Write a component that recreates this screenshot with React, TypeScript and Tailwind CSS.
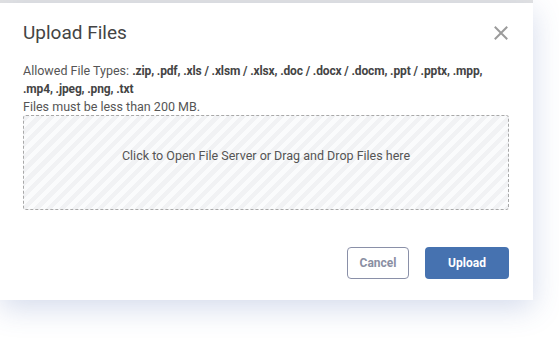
import React from 'react';

const CloseIcon: React.FC = () => (
  <svg width="14" height="14" viewBox="0 0 14 14" fill="none" stroke="#9b9b9b" strokeWidth="2" strokeLinecap="square">
    <path d="M1.5 1.5 L12.5 12.5 M12.5 1.5 L1.5 12.5" />
  </svg>
);

const UploadModal: React.FC = () => {
  return (
    <div className="w-[533px] bg-white shadow-[0_8px_28px_rgba(60,90,170,0.22)] pl-[23px] pr-[24px] pt-[15px] pb-[21px]">
      {/* header */}
      <div className="flex items-center justify-between h-[30px]">
        <h2 className="text-[19px] leading-[24px] text-[#444] font-normal">Upload Files</h2>
        <button className="mr-[1px]">
          <CloseIcon />
        </button>
      </div>

      <div className="mt-[14px] text-[12.5px] leading-[17px] text-[#555]">
        <p>
          Allowed File Types:{' '}
          <span className="font-bold text-[12px] tracking-[-0.14px] text-[#444]">
            .zip, .pdf, .xls / .xlsm / .xlsx, .doc / .docx / .docm, .ppt / .pptx, .mpp, .mp4, .jpeg, .png, .txt
          </span>
        </p>
        <p>Files must be less than 200 MB.</p>
      </div>

      {/* drop zone */}
      <div className="h-[95px] pb-[12px] flex items-center justify-center rounded-[3px] border border-dashed border-[#a9a9a9] bg-[repeating-linear-gradient(135deg,#f1f2f4_0px,#f1f2f4_4.5px,#fafbfc_4.5px,#fafbfc_9px)] cursor-pointer">
        <span className="text-[12.5px] text-[#555]">Click to Open File Server or Drag and Drop Files here</span>
      </div>

      {/* footer */}
      <div className="mt-[37px] flex justify-end gap-4">
        <button className="w-[62px] h-[32px] rounded-[4px] border border-[#8a90a8] text-[12px] font-bold text-[#8a8fa3]">
          Cancel
        </button>
        <button className="w-[84px] h-[32px] rounded-[4px] bg-[#4672b0] text-[12px] font-bold text-white">
          Upload
        </button>
      </div>
    </div>
  );
};

const App: React.FC = () => {
  return (
    <div className="min-h-screen w-[559px] h-[363px] bg-white overflow-hidden font-['Roboto',sans-serif]">
      <div className="w-[533px] h-[3px] bg-[#e4e4e4]" />
      <UploadModal />
    </div>
  );
};

export default App;
